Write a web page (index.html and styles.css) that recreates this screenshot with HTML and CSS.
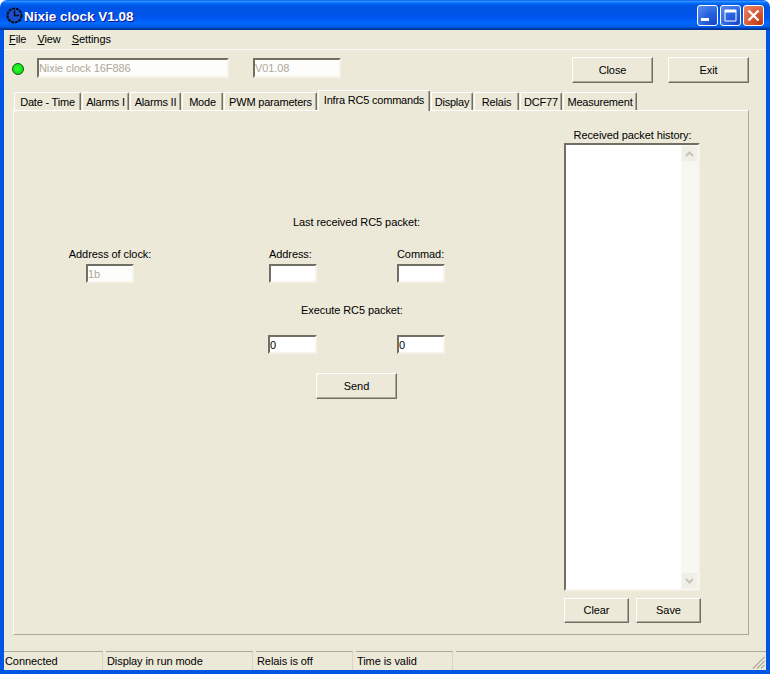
FILE: index.html
```html
<!DOCTYPE html>
<html lang="en">
<head>
<meta charset="utf-8">
<title>Nixie clock V1.08</title>
<link rel="stylesheet" href="styles.css">
</head>
<body>
<div class="window">
  <header class="titlebar">
    <svg class="app-icon" width="17" height="17" viewBox="0 0 17 17">
      <circle cx="8.5" cy="8.5" r="7" fill="#1a50c8" stroke="#050a20" stroke-width="2" stroke-dasharray="3 0.8"/>
      <path d="M8.5 3.5V8.5H13" fill="none" stroke="#050a20" stroke-width="1.5"/>
    </svg>
    <span class="title">Nixie clock V1.08</span>
    <div class="caption-buttons">
      <div class="cap-btn"><svg width="21" height="21" viewBox="0 0 21 21"><rect x="4" y="13" width="8" height="3" fill="#fff"/></svg></div>
      <div class="cap-btn"><svg width="21" height="21" viewBox="0 0 21 21"><path d="M5 5H16V16H5Z" fill="none" stroke="#fff"/><rect x="5" y="5" width="11" height="2.5" fill="#fff"/></svg></div>
      <div class="cap-btn cap-close"><svg width="21" height="21" viewBox="0 0 21 21"><path d="M5.5 5.5L15.5 15.5M15.5 5.5L5.5 15.5" stroke="#fff" stroke-width="2.4"/></svg></div>
    </div>
  </header>
  <div class="client">
    <nav class="menu">
      <span class="menu-item"><u>F</u>ile</span>
      <span class="menu-item"><u>V</u>iew</span>
      <span class="menu-item"><u>S</u>ettings</span>
    </nav>
    <div class="toolbar">
      <span class="led"></span>
      <div class="field field-disabled field-name">Nixie clock 16F886</div>
      <div class="field field-disabled field-version">V01.08</div>
      <div class="toolbar-buttons">
        <div class="button button-wide">Close</div>
        <div class="button button-wide">Exit</div>
      </div>
    </div>
    <div class="tabs">
      <div class="tab t1">Date - Time</div>
      <div class="tab t2">Alarms I</div>
      <div class="tab t3">Alarms II</div>
      <div class="tab t4">Mode</div>
      <div class="tab t5">PWM parameters</div>
      <div class="tab tab-active t6">Infra RC5 commands</div>
      <div class="tab t7">Display</div>
      <div class="tab t8">Relais</div>
      <div class="tab t9">DCF77</div>
      <div class="tab t10">Measurement</div>
    </div>
    <section class="panel">
      <div class="form">
        <div class="label last-label">Last received RC5 packet:</div>
        <div class="label clock-label">Address of clock:</div>
        <div class="label addr-label">Address:</div>
        <div class="label cmd-label">Commad:</div>
        <div class="field field-disabled clock-field">1b</div>
        <div class="field addr-field"></div>
        <div class="field cmd-field"></div>
        <div class="label exec-label">Execute RC5 packet:</div>
        <div class="field exec-addr">0</div>
        <div class="field exec-cmd">0</div>
        <div class="button send">Send</div>
      </div>
      <aside class="history">
        <div class="label history-label">Received packet history:</div>
        <div class="listbox">
          <div class="scrollbar">
            <div class="scroll-btn"><svg width="9" height="6" viewBox="0 0 9 6"><path d="M1 5L4.5 1.5L8 5" fill="none" stroke="#c4c3b8" stroke-width="2"/></svg></div>
            <div class="scroll-track"></div>
            <div class="scroll-btn"><svg width="9" height="6" viewBox="0 0 9 6"><path d="M1 1L4.5 4.5L8 1" fill="none" stroke="#c4c3b8" stroke-width="2"/></svg></div>
          </div>
        </div>
        <div class="history-buttons">
          <div class="button button-small">Clear</div>
          <div class="button button-small">Save</div>
        </div>
      </aside>
    </section>
    <footer class="statusbar">
      <div class="status s1">Connected</div>
      <div class="status s2">Display in run mode</div>
      <div class="status s3">Relais is off</div>
      <div class="status s4">Time is valid</div>
      <div class="status s5">
        <svg class="grip" width="13" height="13" viewBox="0 0 13 13"><path d="M12.5 1L1 12.5M12.5 5L5 12.5M12.5 9L9 12.5" stroke="#aca899" stroke-width="1.2"/></svg>
      </div>
    </footer>
  </div>
</div>
</body>
</html>
```
FILE: styles.css
```css
* { box-sizing: border-box; }
html, body { margin: 0; padding: 0; background: #fff; }
body { font-family: "Liberation Sans", Arial, sans-serif; font-size: 11px; letter-spacing: -0.08px; color: #000; }
.window { width: 770px; height: 674px; display: flex; flex-direction: column; overflow: hidden; }

.titlebar {
  height: 30px; flex: none; display: flex; align-items: center; padding: 0 6px;
  border-radius: 7px 7px 0 0;
  background: linear-gradient(180deg,#0058ee 0%,#3593ff 4%,#288eff 6%,#127dff 8%,#036ffc 10%,#0262ee 14%,#0057e5 20%,#0054e3 24%,#0055eb 56%,#005bf5 66%,#026afe 76%,#0062ef 86%,#0052d6 92%,#0040ab 94%,#003092 100%);
}
.app-icon { flex: none; margin-top: 1px; }
.title { margin-left: 1px; padding-top: 3px; color: #fff; font: bold 13.5px "Liberation Sans", sans-serif; letter-spacing: 0; text-shadow: 1px 1px 0 #0f1089; }
.caption-buttons { margin-left: auto; display: flex; gap: 2px; }
.cap-btn {
  width: 21px; height: 21px; border: 1px solid #fff; border-radius: 3px; overflow: hidden;
  background: radial-gradient(circle at 85% 90%, #1a49c8 0%, #2663e0 45%, #5c8ff0 100%);
}
.cap-btn svg { display: block; margin: -1px; }
.cap-close { background: radial-gradient(circle at 85% 90%, #c23a12 0%, #d95c38 50%, #e9896a 100%); }

.client {
  flex: 1; display: flex; flex-direction: column; background: #ece9d8;
  border: solid #0055e5; border-width: 0 4px 4px;
}
.menu { height: 20px; flex: none; display: flex; align-items: center; padding: 0 0 2px 5px; gap: 11px; border-bottom: 1px solid #fbfaf6; }
.menu-item { line-height: 16px; }

.toolbar { height: 42px; flex: none; display: flex; align-items: flex-start; padding-top: 8px; }
.led {
  width: 12px; height: 12px; margin: 5px 0 0 8px; border-radius: 50%; border: 1px solid #0a5a18;
  background: radial-gradient(circle at 45% 45%, #30ff30, #00d000);
}
.field {
  background: #fff; height: 19px; line-height: 15px; padding: 1px 0 0 0;
  border: 2px solid; border-color: #716f64 #f6f4ea #f6f4ea #716f64;
  white-space: nowrap;
}
.field-disabled { color: #aca899; background: #fdfdfb; }
.field-name { width: 192px; height: 20px; margin-left: 13px; }
.field-version { width: 88px; height: 20px; margin-left: 24px; }
.toolbar-buttons { margin-left: auto; margin-right: 17px; margin-top: -1px; display: flex; gap: 15px; }
.button {
  display: flex; align-items: center; justify-content: center; height: 26px;
  background: #ece9d8; border: 1px solid; border-color: #fff #716f64 #716f64 #fff;
  box-shadow: inset -1px -1px 0 #aca899;
}
.button-wide { width: 81px; }
.button-small { width: 65px; }

.tabs { height: 18px; flex: none; display: flex; align-items: flex-end; padding-left: 10px; position: relative; z-index: 1; letter-spacing: -0.2px; }
.tab {
  height: 18px; flex: none; text-align: center; line-height: 18px; white-space: nowrap;
  border: 1px solid; border-color: #fff #716f64 transparent #fff; border-bottom: 0;
  border-radius: 2px 2px 0 0; margin-right: 1px;
  box-shadow: inset -1px 0 0 #aca899;
}
.tab-active { height: 21px; margin-bottom: -1px; line-height: 18px; padding-bottom: 2px; background: #ece9d8; }
.t1 { width: 67px; } .t2 { width: 47px; } .t3 { width: 51px; } .t4 { width: 41px; } .t5 { width: 93px; }
.t6 { width: 112px; } .t7 { width: 42px; } .t8 { width: 45px; } .t9 { width: 42px; } .t10 { width: 74px; }

.panel {
  height: 525px; width: 736px; margin-left: 9px; flex: none; display: flex;
  border: 1px solid; border-color: #fff #aca899 #aca899 #fff; background: #ece9d8;
}
.form {
  width: 550px; flex: none; padding-top: 104px;
  display: grid; grid-template-columns: 192px 63px 48px 80px 48px; grid-auto-rows: min-content; align-content: start;
}
.label { height: 14px; line-height: 14px; white-space: nowrap; }
.last-label { grid-column: 3 / 6; grid-row: 1; justify-self: center; margin-right: 1px; }
.clock-label { grid-column: 1; grid-row: 2; text-align: center; margin-top: 18px; }
.addr-label { grid-column: 3; grid-row: 2; margin-top: 18px; }
.cmd-label { grid-column: 5; grid-row: 2; margin-top: 18px; }
.clock-field { grid-column: 1; grid-row: 3; width: 48px; justify-self: center; margin-top: 3px; }
.addr-field { grid-column: 3; grid-row: 3; margin-top: 3px; }
.cmd-field { grid-column: 5; grid-row: 3; margin-top: 3px; }
.exec-label { grid-column: 2 / 6; grid-row: 4; justify-self: start; margin: 20px 0 0 95px; }
.exec-addr { grid-column: 3; grid-row: 5; margin: 18px 0 0 -1px; }
.exec-cmd { grid-column: 5; grid-row: 5; margin-top: 18px; }
.send { grid-column: 3 / 6; grid-row: 6; width: 81px; margin: 19px 0 0 47px; }

.history { width: 137px; display: flex; flex-direction: column; }
.history-label { margin-top: 17px; text-align: center; }
.listbox {
  margin-top: 1px; height: 448px; width: 136px; background: #fff; display: flex; justify-content: flex-end;
  border: 2px solid; border-color: #716f64 #f6f4ea #f6f4ea #716f64;
}
.scrollbar { width: 17px; display: flex; flex-direction: column; background: #fafaf6; }
.scroll-btn { height: 17px; flex: none; display: flex; align-items: center; justify-content: center; background: #f0efe6; border: 1px solid #f7f6f0; border-radius: 2px; }
.scroll-track { flex: 1; background: #f8f8f3; }
.history-buttons { margin-top: 7px; display: flex; gap: 7px; }
.history-buttons .button { height: 25px; padding-bottom: 2px; }

.statusbar { margin-top: 16px; height: 19px; flex: 1; display: flex; gap: 3px; }
.status { border-top: 1px solid #aca899; border-right: 1px solid #d8d5c4; padding-left: 1px; line-height: 18px; white-space: nowrap; }
.s1 { width: 99px; } .s2 { width: 147px; } .s3 { width: 97px; } .s4 { width: 97px; }
.s5 { flex: 1; border-right: 0; position: relative; }
.grip { position: absolute; right: 1px; bottom: 1px; }
```
